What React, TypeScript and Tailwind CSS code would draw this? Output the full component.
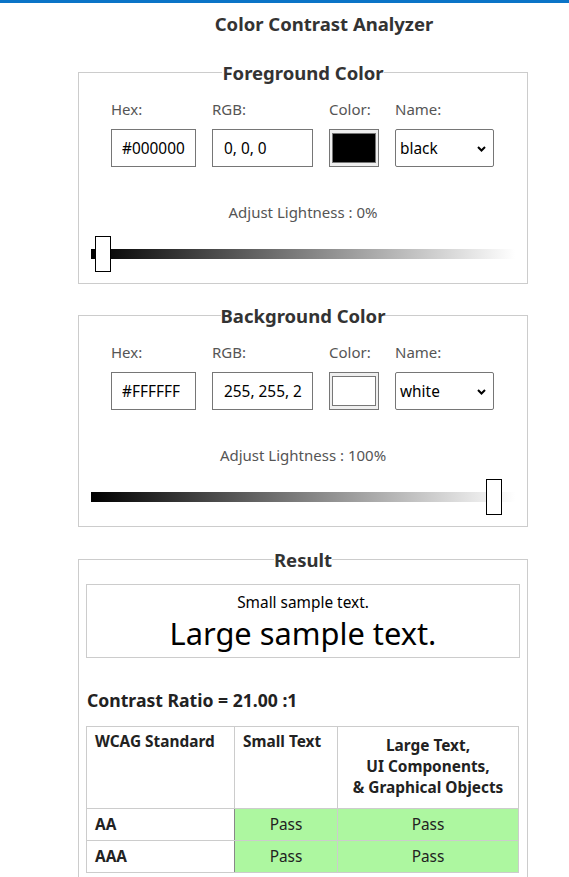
import React from "react";

const font = { fontFamily: '"Noto Sans", "Open Sans", sans-serif' };

function Chevron() {
  return (
    <svg width="9" height="6" viewBox="0 0 9 6" className="shrink-0">
      <path d="M1 1 L4.5 4.5 L8 1" fill="none" stroke="#000" strokeWidth="2" />
    </svg>
  );
}

function ColorFieldset(props: {
  title: string;
  hex: string;
  rgb: string;
  swatch: string;
  name: string;
  lightness: string;
  thumbLeft: number;
}) {
  return (
    <fieldset className="border border-[#ccc] px-[12px] pb-[11px]">
      <legend className="mx-auto px-0 text-[18.5px] font-bold leading-[25px] text-[#333]">
        {props.title}
      </legend>
      <div className="flex gap-[16px] pl-[20px] pt-[14px]">
        <div className="flex flex-col">
          <div className="mb-[10px] text-[15px] leading-[20px] text-[#555]">Hex:</div>
          <div className="flex h-[38px] w-[85px] items-center border border-[#767676] pl-[10px] pr-[4px] pt-[2px] text-[15.4px] text-black">
            <div className="overflow-hidden whitespace-nowrap">{props.hex}</div>
          </div>
        </div>
        <div className="flex flex-col">
          <div className="mb-[10px] text-[15px] leading-[20px] text-[#555]">RGB:</div>
          <div className="flex h-[38px] w-[101px] items-center border border-[#767676] pl-[11px] pr-[10px] pt-[2px] text-[15.4px] text-black">
            <div className="w-full overflow-hidden whitespace-nowrap">{props.rgb}</div>
          </div>
        </div>
        <div className="flex flex-col">
          <div className="mb-[10px] text-[15px] leading-[20px] text-[#555]">Color:</div>
          <div className="flex h-[38px] w-[50px] border border-[#767676] bg-[#efefef] px-[2px] py-[3px]">
            <div className="flex-1 border border-[#777]" style={{ backgroundColor: props.swatch }} />
          </div>
        </div>
        <div className="flex flex-col">
          <div className="mb-[10px] text-[15px] leading-[20px] text-[#555]">Name:</div>
          <div className="flex h-[38px] w-[99px] items-center justify-between rounded-[2px] border border-[#767676] pl-[4px] pr-[7px] pt-[2px] text-[15.4px] text-black">
            <span>{props.name}</span>
            <Chevron />
          </div>
        </div>
      </div>
      <div className="mt-[35px] text-center text-[15px] leading-[20px] text-[#555]">
        {props.lightness}
      </div>
      <div className="relative mt-[14px] flex h-[36px] items-center">
        <div className="h-[10px] w-full bg-[linear-gradient(to_right,#000,#fff)]" />
        <div
          className="absolute top-0 h-[36px] w-[16px] border border-black bg-white"
          style={{ left: props.thumbLeft }}
        />
      </div>
    </fieldset>
  );
}

export default function App() {
  return (
    <div className="min-h-[877px] w-[569px] bg-white text-[#333]" style={font}>
      <div className="h-[3px] bg-[#0b74c7]" />
      <div className="ml-[78px] w-[492px] pt-[8px] text-center text-[18.5px] font-bold leading-[25px] text-[#333]">
        Color Contrast Analyzer
      </div>
      <div className="ml-[78px] mt-[24px] w-[450px]">
        <ColorFieldset
          title="Foreground Color"
          hex="#000000"
          rgb="0, 0, 0"
          swatch="#000000"
          name="black"
          lightness="Adjust Lightness : 0%"
          thumbLeft={4}
        />
        <div className="h-[19px]" />
        <ColorFieldset
          title="Background Color"
          hex="#FFFFFF"
          rgb="255, 255, 255"
          swatch="#FFFFFF"
          name="white"
          lightness="Adjust Lightness : 100%"
          thumbLeft={395}
        />
        <fieldset className="mt-[20px] border border-[#ccc] px-[7px] pb-[10px]">
          <legend className="mx-auto px-0 text-[18.5px] font-bold leading-[25px] text-[#333]">
            Result
          </legend>
          <div className="mt-[12px] flex h-[74px] flex-col items-center border border-[#ccc] text-black">
            <div className="mt-[7px] text-[15.4px] leading-[21px]">Small sample text.</div>
            <div className="text-[30.8px] leading-[40px]">Large sample text.</div>
          </div>
          <div className="mt-[30px] pl-[1px] text-[17.6px] font-bold leading-[24px] text-[#222]">
            Contrast Ratio = 21.00 :1
          </div>
          <table className="mt-[14px] w-[433px] border-collapse text-[15.4px] text-[#222]">
            <thead>
              <tr className="h-[82px] border-b border-b-[#888]">
                <th className="w-[148px] border border-[#ccc] px-[8px] pt-[4px] align-top text-left font-bold leading-[21px]">
                  WCAG Standard
                </th>
                <th className="w-[103px] border border-[#ccc] px-[8px] pt-[4px] align-top text-left font-bold leading-[21px]">
                  Small Text
                </th>
                <th className="border border-[#ccc] px-[4px] pt-[8px] align-top text-center font-bold leading-[21px]">
                  Large Text,
                  <br />
                  UI Components,
                  <br />
                  &amp; Graphical Objects
                </th>
              </tr>
            </thead>
            <tbody>
              {["AA", "AAA"].map((lvl) => (
                <tr key={lvl} className="h-[32px]">
                  <td className="border border-[#ccc] border-r-[#888] px-[8px] font-bold">{lvl}</td>
                  <td className="border border-[#ccc] border-l-[#888] bg-[#adf7a0] text-center">
                    Pass
                  </td>
                  <td className="border border-[#ccc] bg-[#adf7a0] text-center">Pass</td>
                </tr>
              ))}
            </tbody>
          </table>
        </fieldset>
      </div>
    </div>
  );
}
